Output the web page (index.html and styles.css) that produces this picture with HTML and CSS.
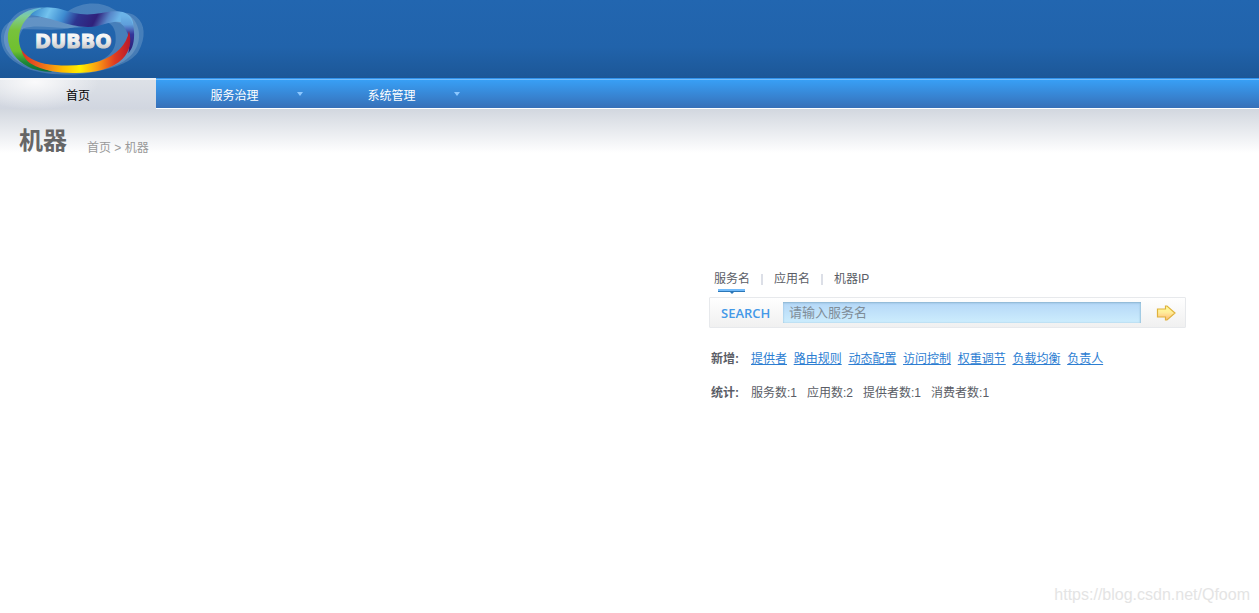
FILE: index.html
```html
<!DOCTYPE html>
<html lang="zh-CN">
<head>
<meta charset="utf-8">
<title>机器 - Dubbo</title>
<link rel="stylesheet" href="styles.css">
</head>
<body>
<header class="header">
  <svg class="logo" viewBox="0 0 480 234" role="img" aria-label="DUBBO">
    <defs>
      <linearGradient id="green" x1="0" y1="0" x2="0" y2="1">
        <stop offset="0" stop-color="#62b8e4"/><stop offset=".13" stop-color="#7fcc9e"/><stop offset=".35" stop-color="#78c23c"/><stop offset=".68" stop-color="#6fc02e"/><stop offset=".85" stop-color="#1e8a38"/><stop offset="1" stop-color="#0e7138"/>
      </linearGradient>
      <linearGradient id="wave" x1="0" y1="0" x2="1" y2=".1">
        <stop offset="0" stop-color="#2c7ec4"/><stop offset=".2" stop-color="#73c2ee"/><stop offset=".36" stop-color="#3e8bd0"/><stop offset=".5" stop-color="#2d3590"/><stop offset=".68" stop-color="#30207a"/><stop offset=".8" stop-color="#5787c9"/><stop offset=".9" stop-color="#6cb4e8"/><stop offset="1" stop-color="#6cb4e8"/>
      </linearGradient>
      <linearGradient id="right" x1="0" y1="0" x2="0" y2="1">
        <stop offset="0" stop-color="#6cb4e8"/><stop offset=".25" stop-color="#5f9fdb"/><stop offset=".5" stop-color="#35349a"/><stop offset="1" stop-color="#2a1d70"/>
      </linearGradient>
      <linearGradient id="fire" x1="0" y1="0" x2="1" y2="0">
        <stop offset="0" stop-color="#d92d24"/><stop offset=".18" stop-color="#ee681d"/><stop offset=".38" stop-color="#ffbd00"/><stop offset=".54" stop-color="#fff000"/><stop offset=".7" stop-color="#fa9b12"/><stop offset=".86" stop-color="#df3b20"/><stop offset="1" stop-color="#b9182d"/>
      </linearGradient>
      <linearGradient id="silver" x1="0" y1="0" x2="0" y2="1">
        <stop offset="0" stop-color="#fff"/><stop offset=".5" stop-color="#eee"/><stop offset="1" stop-color="#bbb"/>
      </linearGradient>
    </defs>
    <g fill="#b7cfe2" fill-opacity=".25" fill-rule="evenodd">
      <path d="M30 65C78 38 153 68 205 33C245 5 304 3 341 28C363 43 387 33 409 50C436 71 438 113 416 153C399 184 348 202 301 212C210 233 111 224 67 199C27 179 1 150 3 109C4 88 13 75 30 65ZM63 88C39 100 37 132 62 162C92 196 173 207 257 194C310 186 345 160 347 122C349 85 335 68 310 64C277 60 260 72 221 82C167 96 114 85 63 88Z"/>
      <path d="M58 36C107 9 167 27 197 47C225 66 257 57 301 41C350 28 392 37 408 69C431 114 410 165 362 189C299 222 139 229 68 192C19 166 0 126 19 86C27 65 37 50 58 36ZM70 85C42 127 63 173 107 186C195 211 327 200 370 149C402 111 378 58 329 66C292 68 257 84 218 84C161 87 115 72 70 85Z"/>
    </g>
    <path fill="url(#green)" d="M150 23C94 18 51 44 32 77C16 104 23 145 50 175C79 205 117 217 157 215C130 207 104 194 84 177C56 151 50 115 64 82C75 54 101 37 126 24Z"/>
    <path fill="url(#wave)" d="M91 45C115 19 155 19 184 28C216 39 245 46 282 42C325 36 361 25 386 45C398 55 402 69 399 85L366 68C350 60 318 71 290 79C250 85 212 76 175 64C143 54 119 49 91 45Z"/>
    <path fill="url(#right)" d="M363 46C386 41 401 66 402 93C404 125 398 145 385 160C391 129 389 96 363 70Z"/>
    <path fill="url(#fire)" d="M64 149C85 179 122 192 165 195C211 199 260 196 300 183C350 164 380 136 387 92C395 123 391 153 368 176C339 207 283 218 227 219C177 220 125 211 96 193C78 182 68 166 64 149Z"/>
    <text class="logo-name" x="105" y="143" fill="url(#silver)" stroke="url(#silver)">DUBBO</text>
  </svg>
</header>

<nav class="nav" aria-label="主导航">
  <a class="nav-item nav-home" href="#">首页</a>
  <a class="nav-item" href="#">服务治理<span class="caret"></span></a>
  <a class="nav-item" href="#">系统管理<span class="caret"></span></a>
</nav>

<div class="title-bar">
  <h1 class="title">机器</h1>
  <p class="crumbs"><a href="#">首页</a> &gt; 机器</p>
</div>

<main class="main">
  <section class="finder">
    <div class="tabs">
      <button class="tab tab-active" type="button">服务名</button>
      <button class="tab" type="button">应用名</button>
      <button class="tab" type="button">机器IP</button>
    </div>
    <form class="search">
      <label class="search-label" for="keyword">SEARCH</label>
      <input class="search-input" id="keyword" type="text" placeholder="请输入服务名">
      <button class="search-go" type="button" aria-label="搜索">
        <svg class="arrow" viewBox="0 0 20 16">
          <defs>
            <linearGradient id="gold" x1="0" y1="0" x2="0" y2="1">
              <stop offset="0" stop-color="#ffff9c"/><stop offset=".45" stop-color="#ffee9a"/><stop offset="1" stop-color="#ffb878"/>
            </linearGradient>
          </defs>
          <path d="M1.5 4H9.5V1H11L19 8L11 15H9.5V12H1.5Z" fill="url(#gold)" stroke="#dfb23c" stroke-width="1.2"/>
        </svg>
      </button>
    </form>
    <dl class="row">
      <dt>新增:</dt>
      <dd class="links"><a href="#">提供者</a>&nbsp; <a href="#">路由规则</a>&nbsp; <a href="#">动态配置</a>&nbsp; <a href="#">访问控制</a>&nbsp; <a href="#">权重调节</a>&nbsp; <a href="#">负载均衡</a>&nbsp; <a href="#">负责人</a></dd>
    </dl>
    <dl class="row">
      <dt>统计:</dt>
      <dd class="stats"><span>服务数:1</span><span>应用数:2</span><span>提供者数:1</span><span>消费者数:1</span></dd>
    </dl>
  </section>
</main>

<footer class="footer">https://blog.csdn.net/Qfoom</footer>
</body>
</html>
```
FILE: styles.css
```css
* {
  box-sizing: border-box;
}

body {
  display: flex;
  flex-direction: column;
  min-height: 100vh;
  margin: 0;
  background: #fff;
  color: #5a5d66;
  font: 12px/18px "Liberation Sans", "Noto Sans CJK SC", sans-serif;
}

h1, p, dl, dd {
  margin: 0;
}

button {
  padding: 0;
  border: 0;
  background: none;
  color: inherit;
  font: inherit;
  cursor: pointer;
}

.header {
  height: 78px;
  background: linear-gradient(#2266b0, #2163ab 60%, #1c5797);
}

.logo {
  display: block;
  width: 160px;
  height: 78px;
}

.logo-name {
  font: bold 57px "DejaVu Sans", sans-serif;
  stroke-width: 3px;
}

.nav {
  display: flex;
  height: 31px;
  border-bottom: 1px solid #fff;
  background: linear-gradient(#3194ee 0 1px, #76bdfa 1px 2px, #389ff5 2px, #3770b8);
}

.nav-item {
  position: relative;
  width: 157px;
  color: #fff;
  line-height: 36px;
  text-align: center;
  text-decoration: none;
}

.nav-home {
  width: 156px;
  height: 31px;
  background: radial-gradient(ellipse 64px 28px at 35px 4px, #fafafb, transparent), linear-gradient(#f0f2f5 0 2px, #dde1e7 2px, #d1d6e0);
  color: #000;
}

.caret {
  position: absolute;
  top: 14px;
  right: 10px;
  border: 3px solid transparent;
  border-top: 4px solid #8cc8ff;
  border-bottom: 0;
}

.title-bar {
  display: flex;
  align-items: flex-start;
  gap: 20px;
  height: 48px;
  padding: 14px 19px 0;
  background: linear-gradient(#d2d7df, #fff 44px);
}

.title {
  color: #666;
  font-size: 24px;
  line-height: 36px;
}

.crumbs {
  padding-top: 16px;
  color: #999;
}

.crumbs a {
  color: inherit;
  text-decoration: none;
}

.main {
  display: flex;
  flex: 1;
  justify-content: flex-end;
  padding: 113px 73px 0 20px;
}

.finder {
  width: 477px;
}

.tabs {
  display: flex;
  height: 27px;
  padding-left: 5px;
}

.tab {
  position: relative;
  height: 18px;
}

.tab + .tab {
  margin-left: 11px;
}

.tab + .tab::before {
  display: inline-block;
  width: 2px;
  height: 11px;
  margin-right: 11px;
  background: #dcdfe7;
  content: "";
  vertical-align: -2px;
}

.tab-active::before {
  position: absolute;
  top: 19px;
  left: 4px;
  width: 27px;
  height: 3px;
  background: linear-gradient(#72bbfa 0 2px, #2b77b8 2px);
  content: "";
}

.tab-active::after {
  position: absolute;
  top: 22px;
  left: 16px;
  border: 2px solid transparent;
  border-top-color: #2b77b8;
  border-bottom: 0;
  content: "";
}

.search {
  display: flex;
  align-items: center;
  height: 31px;
  border: 1px solid #e7e9ec;
  border-radius: 1px;
  background: linear-gradient(#fff, #f0f0f0);
}

.search-label {
  width: 73px;
  padding-left: 11px;
  color: #4499e8;
  font: 600 13px/20px "Open Sans", sans-serif;
}

.search-input {
  flex: 1;
  min-width: 0;
  height: 21px;
  padding: 0 6px;
  border: 0;
  background: linear-gradient(#b4d7f7, #cdedfd);
  box-shadow: inset 0 1px 2px #8bb4d0, inset -1px 0 2px #a5cfe5;
  color: #333;
  font: 13px/21px "Liberation Sans", "Noto Sans CJK SC", sans-serif;
}

.search-input::placeholder {
  color: #7f8d98;
}

.search-go {
  display: flex;
  width: 44px;
  padding-left: 15px;
}

.arrow {
  width: 20px;
  height: 16px;
}

.row {
  display: flex;
  margin-top: 16px;
  padding-left: 2px;
}

.search + .row {
  margin-top: 22px;
}

.row dt {
  width: 40px;
  font-weight: bold;
}

.links a {
  color: #2d7ed2;
  text-decoration: underline;
}

.stats {
  display: flex;
  gap: 10px;
}

.footer {
  padding: 0 9px 8px;
  color: #e4e4e4;
  font-size: 16px;
  line-height: 20px;
  text-align: right;
}
```
